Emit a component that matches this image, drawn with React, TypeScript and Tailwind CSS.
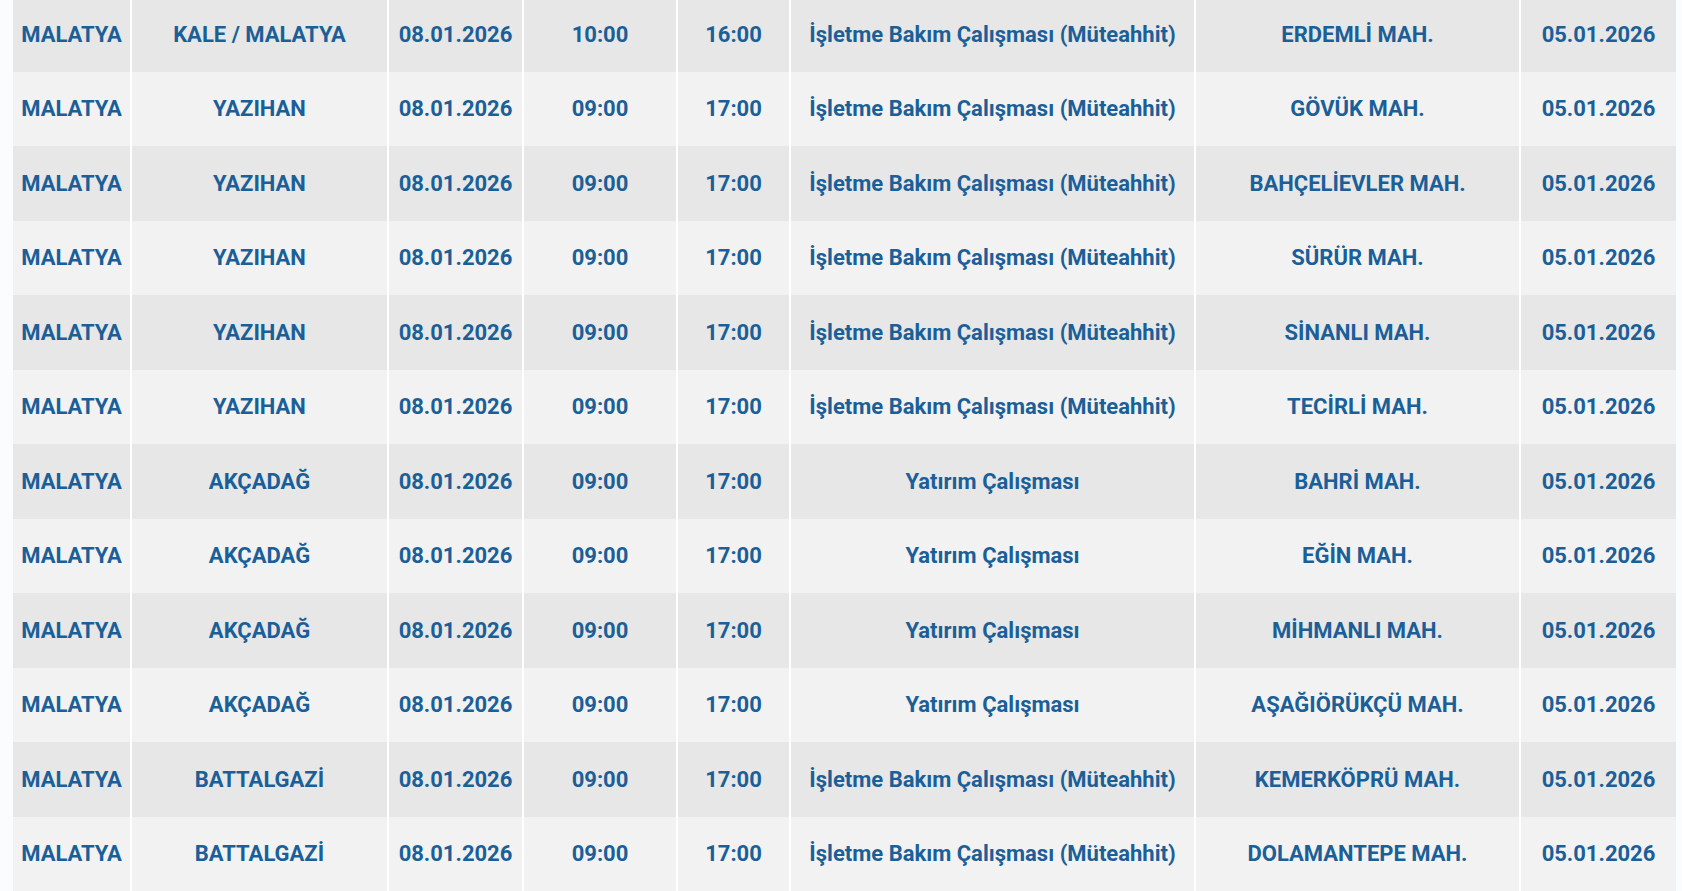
const ROWS = [
  ["KALE / MALATYA", "10:00", "16:00", "İşletme Bakım Çalışması (Müteahhit)", "ERDEMLİ MAH."],
  ["YAZIHAN", "09:00", "17:00", "İşletme Bakım Çalışması (Müteahhit)", "GÖVÜK MAH."],
  ["YAZIHAN", "09:00", "17:00", "İşletme Bakım Çalışması (Müteahhit)", "BAHÇELİEVLER MAH."],
  ["YAZIHAN", "09:00", "17:00", "İşletme Bakım Çalışması (Müteahhit)", "SÜRÜR MAH."],
  ["YAZIHAN", "09:00", "17:00", "İşletme Bakım Çalışması (Müteahhit)", "SİNANLI MAH."],
  ["YAZIHAN", "09:00", "17:00", "İşletme Bakım Çalışması (Müteahhit)", "TECİRLİ MAH."],
  ["AKÇADAĞ", "09:00", "17:00", "Yatırım Çalışması", "BAHRİ MAH."],
  ["AKÇADAĞ", "09:00", "17:00", "Yatırım Çalışması", "EĞİN MAH."],
  ["AKÇADAĞ", "09:00", "17:00", "Yatırım Çalışması", "MİHMANLI MAH."],
  ["AKÇADAĞ", "09:00", "17:00", "Yatırım Çalışması", "AŞAĞIÖRÜKÇÜ MAH."],
  ["BATTALGAZİ", "09:00", "17:00", "İşletme Bakım Çalışması (Müteahhit)", "KEMERKÖPRÜ MAH."],
  ["BATTALGAZİ", "09:00", "17:00", "İşletme Bakım Çalışması (Müteahhit)", "DOLAMANTEPE MAH."],
];

export default function App() {
  return (
    <div className="h-[891px] w-[1682px] overflow-hidden bg-[#fbfcfd] pl-[13px] pr-[6px]">
      <table
        className="-mt-[3px] w-full table-fixed border-collapse text-center font-['Roboto','Liberation_Sans',sans-serif] text-[22px] font-bold text-[#1b5f98]"
      >
        <colgroup>
          <col className="w-[118px]" />
          <col className="w-[257px]" />
          <col className="w-[135px]" />
          <col className="w-[154px]" />
          <col className="w-[113px]" />
          <col className="w-[405px]" />
          <col className="w-[325px]" />
          <col className="w-[156px]" />
        </colgroup>
        <tbody>
          {ROWS.map(([ilce, start, end, reason, mahalle], i) => (
            <tr key={i} className={i % 2 === 0 ? "h-[74.5px] bg-[#e7e7e7]" : "h-[74.5px] bg-[#f2f2f2]"}>
              <td className="border-r-2 border-white">MALATYA</td>
              <td className="border-r-2 border-white">{ilce}</td>
              <td className="border-r-2 border-white">08.01.2026</td>
              <td className="border-r-2 border-white">{start}</td>
              <td className="border-r-2 border-white">{end}</td>
              <td className="border-r-2 border-white">{reason}</td>
              <td className="border-r-2 border-white">{mahalle}</td>
              <td>05.01.2026</td>
            </tr>
          ))}
        </tbody>
      </table>
    </div>
  );
}
